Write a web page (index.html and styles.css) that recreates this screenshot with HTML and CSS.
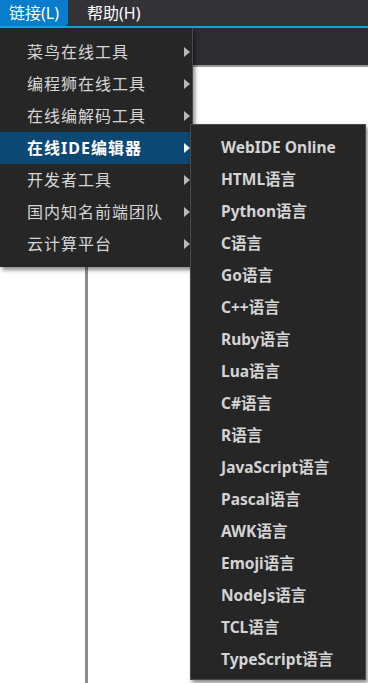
FILE: index.html
```html
<!DOCTYPE html>
<html lang="zh">
<head>
  <meta charset="UTF-8">
  <title>链接菜单</title>
  <link rel="stylesheet" href="styles.css">
</head>
<body>
  <div class="menubar">
    <span class="menu-title active">链接(L)</span>
    <span class="menu-title">帮助(H)</span>
  </div>
  <div class="toolbar"></div>
  <div class="workspace">
    <div class="sidebar"></div>
    <div class="editor"></div>
  </div>

  <!-- 下拉菜单 -->
  <ul class="dropdown">
    <li>菜鸟在线工具<span class="arrow"></span></li>
    <li>编程狮在线工具<span class="arrow"></span></li>
    <li>在线编解码工具<span class="arrow"></span></li>
    <li class="selected">在线IDE编辑器<span class="arrow"></span></li>
    <li>开发者工具<span class="arrow"></span></li>
    <li>国内知名前端团队<span class="arrow"></span></li>
    <li>云计算平台<span class="arrow"></span></li>
  </ul>

  <!-- 子菜单 -->
  <ul class="submenu">
    <li>WebIDE Online</li>
    <li>HTML语言</li>
    <li>Python语言</li>
    <li>C语言</li>
    <li>Go语言</li>
    <li>C++语言</li>
    <li>Ruby语言</li>
    <li>Lua语言</li>
    <li>C#语言</li>
    <li>R语言</li>
    <li>JavaScript语言</li>
    <li>Pascal语言</li>
    <li>AWK语言</li>
    <li>Emoji语言</li>
    <li>NodeJs语言</li>
    <li>TCL语言</li>
    <li>TypeScript语言</li>
  </ul>
</body>
</html>
```

FILE: styles.css
```css
body {
  margin: 0;
  font-family: "Noto Sans", "Noto Sans CJK SC", sans-serif;
  background: #fff;
  height: 683px;
  overflow: hidden;
}
.menubar {
  height: 26px;
  background: #333337;
  display: flex;
  border-bottom: 2px solid #1a9fe0;
}
.menu-title {
  color: #fff;
  font-size: 16px;
  line-height: 26px;
  padding: 0 9px;
  margin-right: 10px;
}
.menu-title.active {
  background: #0a7ccc;
  border-bottom-right-radius: 4px;
}
.toolbar {
  height: 37px;
  background: #2d2d30;
  border-bottom: 2px solid #9a9a9a;
}
.workspace {
  display: flex;
  height: 616px;
}
.sidebar {
  width: 85px;
  border-right: 3px solid #8a8c8c;
}
.editor {
  flex: 1;
}
.dropdown, .submenu {
  list-style: none;
  margin: 0;
  position: absolute;
  background: #262627;
  box-shadow: 2px 3px 4px rgba(0, 0, 0, 0.45);
}
.dropdown {
  top: 28px;
  left: 0;
  width: 192px;
  padding: 8px 0 7px;
  border-right: 1px solid #4a4a4e;
}
.dropdown li {
  position: relative;
  height: 32px;
  line-height: 32px;
  padding-left: 27px;
  color: #d6d6d6;
  font-size: 16px;
  letter-spacing: 1px;
}
.dropdown li.selected {
  background: #0b4873;
  color: #fff;
  font-weight: bold;
}
.arrow {
  position: absolute;
  left: 184px;
  top: 11px;
  width: 0;
  height: 0;
  border-top: 5px solid transparent;
  border-bottom: 5px solid transparent;
  border-left: 6px solid #b8b8b8;
}
.selected .arrow {
  border-left-color: #fff;
}
.submenu {
  top: 124px;
  left: 190px;
  width: 174px;
  padding: 6px 0 4px;
  border: 1px solid #4a4a4e;
}
.submenu li {
  height: 32px;
  line-height: 32px;
  padding-left: 30px;
  color: #d4d4d4;
  font-size: 15.5px;
  font-weight: bold;
}
```
